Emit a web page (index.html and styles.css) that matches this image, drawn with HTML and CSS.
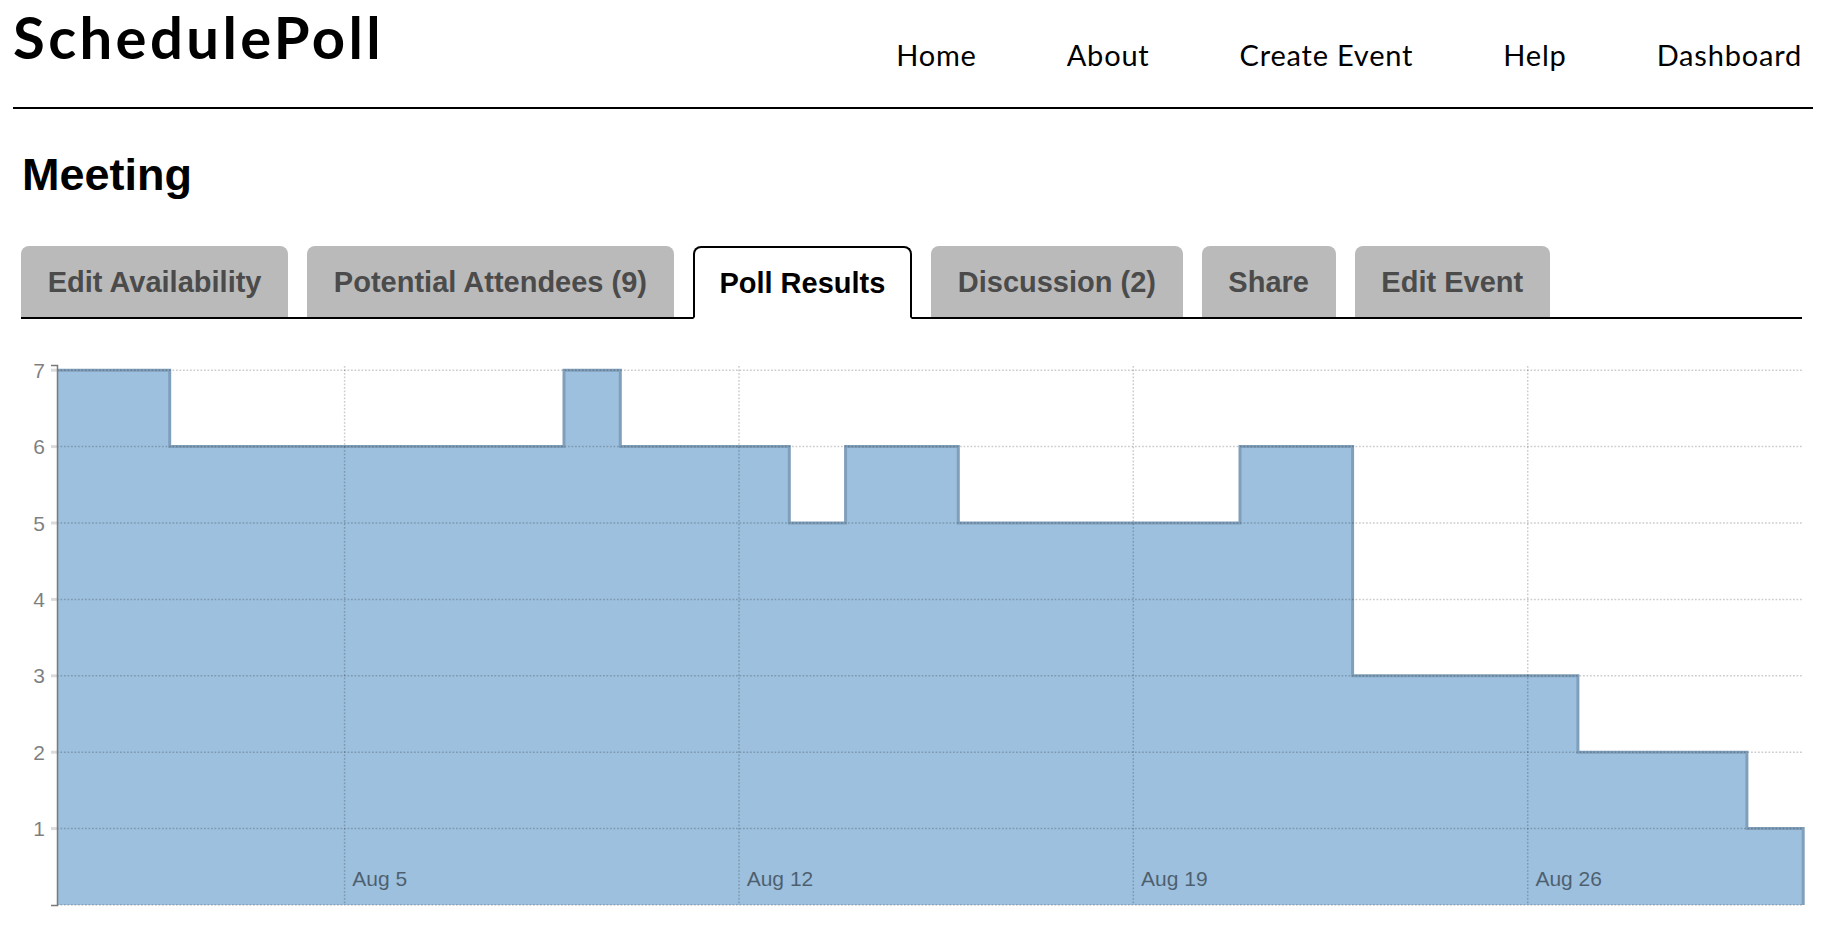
FILE: index.html
```html
<!DOCTYPE html>
<html lang="en">
<head>
<meta charset="utf-8">
<title>SchedulePoll - Meeting</title>
<link rel="stylesheet" href="styles.css">
</head>
<body>
<header class="topbar">
  <div class="logo">SchedulePoll</div>
  <nav class="mainnav">
    <a href="#">Home</a>
    <a href="#">About</a>
    <a href="#">Create Event</a>
    <a href="#">Help</a>
    <a href="#">Dashboard</a>
  </nav>
</header>
<main class="event">
  <h1 class="event-title">Meeting</h1>
  <nav class="tabs">
    <a class="tab" href="#">Edit Availability</a>
    <a class="tab" href="#">Potential Attendees (9)</a>
    <a class="tab active" href="#">Poll Results</a>
    <a class="tab" href="#">Discussion (2)</a>
    <a class="tab" href="#">Share</a>
    <a class="tab" href="#">Edit Event</a>
  </nav>
</main>
<section class="chart">
  <svg class="chart-svg" width="1832" height="588" viewBox="0 340 1832 588" xmlns="http://www.w3.org/2000/svg">
    <path class="area" d="M57,905 V370.2 H169.7 V446.6 H564 V370.2 H620.3 V446.6 H789.3 V523 H845.6 V446.6 H958.3 V523 H1240 V446.6 H1352.6 V675.8 H1577.9 V752.2 H1746.9 V828.6 H1803.2 V905 Z"/>
    <path class="line" d="M57,370.2 H169.7 V446.6 H564 V370.2 H620.3 V446.6 H789.3 V523 H845.6 V446.6 H958.3 V523 H1240 V446.6 H1352.6 V675.8 H1577.9 V752.2 H1746.9 V828.6 H1803.2 V905"/>
    <g class="ygrid">
      <line x1="57" x2="1803" y1="905" y2="905"/>
      <line x1="57" x2="1803" y1="828.6" y2="828.6"/>
      <line x1="57" x2="1803" y1="752.2" y2="752.2"/>
      <line x1="57" x2="1803" y1="675.8" y2="675.8"/>
      <line x1="57" x2="1803" y1="599.4" y2="599.4"/>
      <line x1="57" x2="1803" y1="523" y2="523"/>
      <line x1="57" x2="1803" y1="446.6" y2="446.6"/>
      <line x1="57" x2="1803" y1="370.2" y2="370.2"/>
    </g>
    <g class="xgrid">
      <line x1="344.6" x2="344.6" y1="366" y2="905"/>
      <line x1="739" x2="739" y1="366" y2="905"/>
      <line x1="1133.3" x2="1133.3" y1="366" y2="905"/>
      <line x1="1527.7" x2="1527.7" y1="366" y2="905"/>
    </g>
    <g class="yticks">
      <line x1="51" x2="57" y1="828.6" y2="828.6"/>
      <line x1="51" x2="57" y1="752.2" y2="752.2"/>
      <line x1="51" x2="57" y1="675.8" y2="675.8"/>
      <line x1="51" x2="57" y1="599.4" y2="599.4"/>
      <line x1="51" x2="57" y1="523" y2="523"/>
      <line x1="51" x2="57" y1="446.6" y2="446.6"/>
      <line x1="51" x2="57" y1="370.2" y2="370.2"/>
    </g>
    <path class="yaxis" d="M51,365.5 H57.5 V905.5 H51"/>
    <g class="ylabels">
      <text x="45" y="836.1">1</text>
      <text x="45" y="759.7">2</text>
      <text x="45" y="683.3">3</text>
      <text x="45" y="606.9">4</text>
      <text x="45" y="530.5">5</text>
      <text x="45" y="454.1">6</text>
      <text x="45" y="377.7">7</text>
    </g>
    <g class="xlabels">
      <text x="352.3" y="885.7">Aug 5</text>
      <text x="746.7" y="885.7">Aug 12</text>
      <text x="1141" y="885.7">Aug 19</text>
      <text x="1535.4" y="885.7">Aug 26</text>
    </g>
  </svg>
</section>
</body>
</html>
```

FILE: styles.css
```css
html, body {
  margin: 0;
  padding: 0;
  background: #fff;
}

body {
  width: 1832px;
  height: 928px;
  overflow: hidden;
  font-family: "Liberation Sans", Arial, sans-serif;
  color: #000;
}

a {
  text-decoration: none;
  color: inherit;
}

.topbar {
  display: flex;
  justify-content: space-between;
  align-items: flex-start;
  margin: 0 19px 0 13px;
  height: 107px;
  border-bottom: 2px solid #000;
}

.logo {
  font-family: "Lato", "Open Sans", sans-serif;
  font-weight: 700;
  font-size: 58px;
  line-height: 58px;
  letter-spacing: 3.4px;
  padding-top: 8px;
  color: #000;
}

.mainnav {
  display: flex;
  gap: 90px;
  padding-top: 41px;
  padding-right: 11px;
}

.mainnav a {
  font-family: "Lato", "Open Sans", sans-serif;
  font-size: 29px;
  line-height: 28px;
  letter-spacing: 0.8px;
  color: #000;
}

.event {
  padding: 0 30px 0 21px;
}

.event-title {
  margin: 44px 0 0 1px;
  font-family: "Liberation Sans", Arial, sans-serif;
  font-weight: 700;
  font-size: 45px;
  line-height: 44px;
}

.tabs {
  display: flex;
  gap: 19px;
  margin-top: 49px;
  border-bottom: 2px solid #000;
  height: 71px;
}

.tab {
  display: block;
  height: 71px;
  box-sizing: border-box;
  padding: 0 26.7px;
  line-height: 72px;
  font-family: "Liberation Sans", Arial, sans-serif;
  font-weight: 700;
  font-size: 29px;
  color: #4b4b4b;
  background: #bababa;
  border-radius: 8px 8px 0 0;
  white-space: nowrap;
  overflow: hidden;
}

.tab.active {
  background: #fff;
  color: #000;
  border: 2px solid #000;
  border-bottom: 2px solid #fff;
  height: 73px;
  padding: 0 24.7px;
  line-height: 70px;
  margin-bottom: -2px;
}

.chart {
  margin-top: 21px;
}

.chart-svg {
  display: block;
}

.area {
  fill: #9dc0de;
  stroke: none;
}

.line {
  fill: none;
  stroke: #809fbb;
  stroke-width: 3;
}

.ygrid line,
.xgrid line {
  stroke: rgba(0, 0, 0, 0.2);
  stroke-width: 1.5;
  stroke-dasharray: 1.75 1.75;
}

.yticks line {
  stroke: rgba(0, 0, 0, 0.14);
  stroke-width: 3;
}

.yaxis {
  fill: none;
  stroke: #7a7a7a;
  stroke-width: 1.5;
}

.ylabels text {
  font-family: "Liberation Sans", Arial, sans-serif;
  font-size: 21px;
  fill: #000;
  opacity: 0.5;
  text-anchor: end;
}

.xlabels text {
  font-family: "Liberation Sans", Arial, sans-serif;
  font-size: 21px;
  fill: #000;
  opacity: 0.5;
}
```
